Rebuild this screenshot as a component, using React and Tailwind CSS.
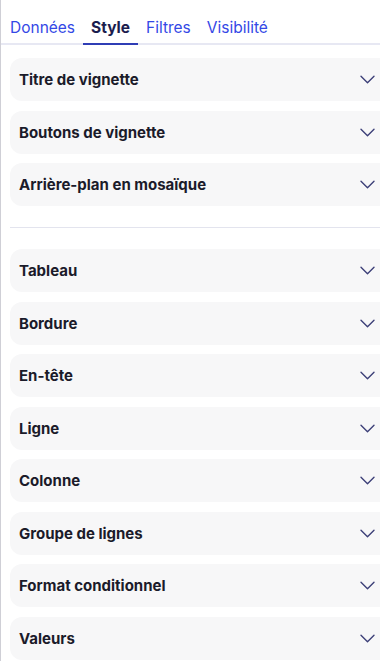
import React from 'react';

const tabs = ['Données', 'Style', 'Filtres', 'Visibilité'];
const groupA = ['Titre de vignette', 'Boutons de vignette', 'Arrière-plan en mosaïque'];
const groupB = [
  'Tableau',
  'Bordure',
  'En-tête',
  'Ligne',
  'Colonne',
  'Groupe de lignes',
  'Format conditionnel',
  'Valeurs',
];

const Chevron = () => (
  <svg width="15" height="9" viewBox="0 0 15 9" fill="none" className="text-[#3c3f78]">
    <path d="M1 1.2l6.5 6.5 6.5-6.5" stroke="currentColor" strokeWidth="1.4" strokeLinecap="round" strokeLinejoin="round" />
  </svg>
);

const Section = ({ title }) => (
  <div className="flex h-[43px] items-center justify-between rounded-l-xl bg-[#f7f7f8] pl-[9px] pr-[5px]">
    <span className="pt-[2px] text-[15px] font-bold text-[#1b1b2a]">{title}</span>
    <Chevron />
  </div>
);

export default function App() {
  return (
    <div
      className="h-[661px] w-[380px] overflow-hidden border-l border-[#cfcfd6] bg-white"
      style={{ fontFamily: 'Inter, "Noto Sans", sans-serif' }}
    >
      {/* tabs */}
      <div className="flex h-[45px] items-end border-b-2 border-[#e7e8f3] pl-[1px]">
        {tabs.map((t) => {
          const active = t === 'Style';
          return (
            <button
              key={t}
              className={`-mb-[2px] px-2 pb-[5px] text-[15.5px] leading-[20px] ${
                active
                  ? 'border-b-2 border-[#2f3db5] font-bold text-[#1b1d4e]'
                  : 'border-b-2 border-transparent text-[#3448e6]'
              }`}
            >
              {t}
            </button>
          );
        })}
      </div>

      <div className="flex flex-col gap-[9.5px] pl-[9px] pt-[13px]">
        {groupA.map((s) => (
          <Section key={s} title={s} />
        ))}
      </div>

      <div className="ml-[9px] mt-[21px] border-t border-[#e3e4ee]" />

      <div className="flex flex-col gap-[9.5px] pl-[9px] pt-[21px]">
        {groupB.map((s) => (
          <Section key={s} title={s} />
        ))}
      </div>
    </div>
  );
}
